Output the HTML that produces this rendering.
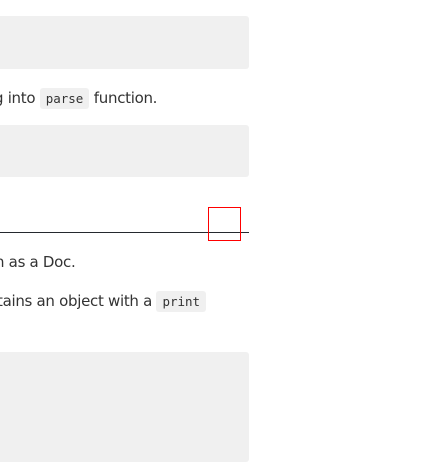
<!DOCTYPE html>
<html><head><style>
body{margin:0;width:448px;height:448px;overflow:hidden;background:#fff;position:relative;font-family:"DejaVu Sans","Liberation Sans",sans-serif;font-size:15px;color:#333}
.blk{position:absolute;left:-10px;width:259px;background:#f0f0f0;border-radius:3px}
.t{position:absolute;white-space:nowrap;line-height:20px;letter-spacing:-0.3px}
code{font-family:"DejaVu Sans Mono","Liberation Mono",monospace;font-size:12.5px;background:#f0f0f0;border-radius:3px;padding:3px 6px;color:#333;letter-spacing:0}
</style></head><body>
<div class="blk" style="top:16px;height:53px"></div>
<div class="t" style="top:88px;left:-6px">g into <code>parse</code> function.</div>
<div class="blk" style="top:125px;height:52px"></div>
<div style="position:absolute;left:0;top:232px;width:249px;height:1px;background:#24292e"></div>
<div style="position:absolute;left:208px;top:207px;width:31px;height:32px;border:1px solid #f00"></div>
<div class="t" style="top:252px;left:-5px">n as a Doc.</div>
<div class="t" style="top:291px;left:-3px">tains an object with a <code>print</code></div>
<div class="blk" style="top:352px;height:110px"></div>
</body></html>
